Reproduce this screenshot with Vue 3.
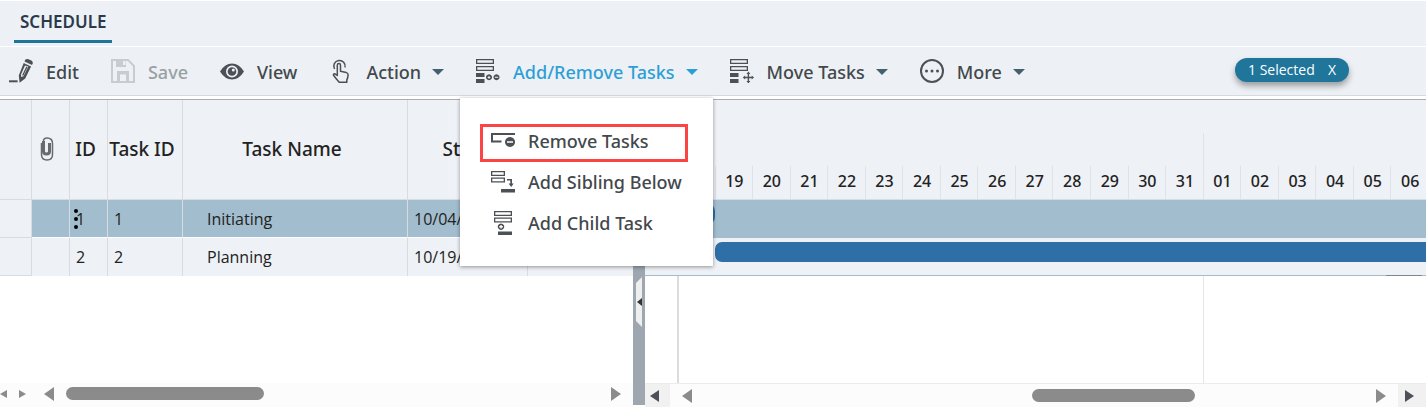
<script setup>
const rows = [
  { id: 1, taskId: 1, name: 'Initiating', start: '10/04/2023', selected: true },
  { id: 2, taskId: 2, name: 'Planning', start: '10/19/2023', selected: false },
]

const days = [
  '18', '19', '20', '21', '22', '23', '24', '25', '26', '27',
  '28', '29', '30', '31', '01', '02', '03', '04', '05', '06',
]

const gridScroll = { start: 0, size: 37 }
const chartScroll = { start: 49.8, size: 24.4 }

const thumb = (s) => ({ marginLeft: s.start + '%', width: s.size + '%' })
</script>

<template>
  <div class="app">
    <nav class="tabs">
      <a href="#schedule" class="tab">SCHEDULE</a>
    </nav>

    <div class="toolbar" role="toolbar" aria-label="Schedule">
      <button class="tool" type="button">
        <svg class="icon" viewBox="0 0 24 24">
          <path d="M0 21.3h8.6v2H0z" />
          <path d="M16.2.8Q17.600-.4 19.500.3l2.900 1.300q1.800 1 1.300 3l-.7 1.300-7.500-3.400z" />
          <path fill-rule="evenodd" d="M14.700 4l7.400 3.400-5.900 12.100-5.600 4.200-.8-7.300zM16 6.600l-4 8.800.2 2.700 2.300-.9 4.700-9.600z" />
          <path d="M17.300 7.400l1.200.6-4.200 8.700-1.200-.5z" />
        </svg>
        <span>Edit</span>
      </button>

      <button class="tool" type="button" disabled>
        <svg class="icon" viewBox="0 0 24 24">
          <path fill-rule="evenodd" d="M0 0h17.500L24 6.500V22h-2V7.400L16.700 2H15v6H5V2H2v20h4v-10h12v10h6v2H0zM12 2v4h2.500V2zM9 15.500V22h6v-6.500z" />
          <path d="M10 16.500h4v3.500h-4z" class="slot" />
        </svg>
        <span>Save</span>
      </button>

      <button class="tool" type="button">
        <svg class="icon" viewBox="0 0 24 24">
          <path fill-rule="evenodd" d="M0 12.500Q5 4.500 12 4.500T24 12.500Q19 20.500 12 20.500T0 12.500zM12 6.500a6 6 0 1 0 0 12a6 6 0 0 0 0-12z" />
          <circle cx="12" cy="12.500" r="4.300" />
          <circle cx="13.300" cy="11" r="1.500" class="glint" />
        </svg>
        <span>View</span>
      </button>

      <button class="tool" type="button">
        <svg class="icon line" viewBox="0 0 24 24">
          <path d="M5.500 10A5.700 5.700 0 1 1 16 8.500" />
          <path d="M8.300 16.500V6.200q0-1.600 1.600-1.600t1.600 1.600v6l5.800 1.400q1.800.5 1.800 2.300-.1 2.400-1.300 5.200v2.200h-7.600q-3-3.400-5.700-7-.2-1.600 1.400-1.500z" />
        </svg>
        <span>Action</span>
        <i class="caret"></i>
      </button>

      <div class="dropdown">
        <button class="tool open" type="button" aria-haspopup="menu" aria-expanded="true">
          <svg class="icon" viewBox="0 0 24 24">
            <path fill-rule="evenodd" d="M0 0h18v5H0zM1.300 1.300v2.400h15.400V1.300zM0 7h18v5H0zM1.300 8.300v2.400h15.400V8.300z" />
            <path d="M0 14h8.500v4H0zM0 20h8.500v4H0z" />
            <path fill-rule="evenodd" d="M13 15.300a3 3 0 1 0 .01 0zM12.500 17h1v.9h.8v1h-.8v.9h-1v-.9h-.8v-1h.8zM20.500 15.300a3 3 0 1 0 .01 0zM18.800 17.800h3.400v1h-3.400z" />
          </svg>
          <span>Add/Remove Tasks</span>
          <i class="caret"></i>
        </button>

        <div class="menu" role="menu">
          <button class="item marked" type="button" role="menuitem">
            <svg class="icon" viewBox="0 0 24 24">
              <path d="M0 4h24v2H2v5.500h8.500v2H0z" />
              <path fill-rule="evenodd" d="M19 8a5 5 0 1 0 .01 0zM16 12.200h6v1.600h-6z" />
            </svg>
            <span>Remove Tasks</span>
          </button>
          <button class="item" type="button" role="menuitem">
            <svg class="icon" viewBox="0 0 24 24">
              <path fill-rule="evenodd" d="M0 1h14v5H0zM1.300 2.300v2.400h11.400V2.300zM0 7.500h14v5H0zM1.300 8.800v2.400h11.400V8.800z" />
              <path d="M16 9h5v4.500h1.700L20.200 17l-2.600-3.500h1.700v-3H16zM10 19h14v3.500H10z" />
            </svg>
            <span>Add Sibling Below</span>
          </button>
          <button class="item" type="button" role="menuitem">
            <svg class="icon" viewBox="0 0 24 24">
              <path fill-rule="evenodd" d="M3 0h18v5H3zM4.300 1.300v2.400h15.400V1.300zM3 6.500h18v5H3zM4.300 7.800v2.400h15.400V7.800z" />
              <path fill-rule="evenodd" d="M10 12.500a3.200 3.200 0 1 0 .01 0zM9.400 14h1.300v1.100h1.100v1.300h-1.100v1.100H9.400v-1.100H8.300v-1.300h1.100zM7 20.500h14V24H7z" />
            </svg>
            <span>Add Child Task</span>
          </button>
        </div>
      </div>

      <button class="tool" type="button">
        <svg class="icon" viewBox="0 0 24 24">
          <path fill-rule="evenodd" d="M0 0h18v5H0zM1.300 1.300v2.400h15.400V1.300zM0 7h18v5H0zM1.300 8.300v2.400h15.400V8.300z" />
          <path d="M0 14h8.500v4H0zM0 20h8.500v4H0z" />
          <path d="M18.400 12.500l1.900 2.500h-1.200v2.800h2.600v-1.300l2.300 2-2.300 2v-1.300h-2.600v2.800h1.200l-1.900 2.500-1.900-2.500h1.200v-2.800h-2.600v1.300l-2.300-2 2.300-2v1.300h2.600V15h-1.200z" />
        </svg>
        <span>Move Tasks</span>
        <i class="caret"></i>
      </button>

      <button class="tool" type="button">
        <svg class="icon" viewBox="0 0 24 24">
          <circle cx="12" cy="12" r="11" class="ring" />
          <circle cx="6.500" cy="12" r="1.500" />
          <circle cx="12" cy="12" r="1.500" />
          <circle cx="17.500" cy="12" r="1.500" />
        </svg>
        <span>More</span>
        <i class="caret"></i>
      </button>

      <div class="pill">
        <span>1 Selected</span>
        <button type="button" aria-label="Clear selection">X</button>
      </div>
    </div>

    <main class="panes">
      <section class="grid-pane">
        <table>
          <colgroup>
            <col class="c-handle" /><col class="c-id" /><col class="c-id" />
            <col class="c-task" /><col class="c-name" /><col class="c-start" /><col />
          </colgroup>
          <thead>
            <tr>
              <th></th>
              <th>
                <svg class="clip" viewBox="0 0 14 24" role="img" aria-label="Attachments">
                  <path d="M3.500 4v10.500q0 2.500 3 2.500t3-2.500V6" class="inner" />
                  <path d="M1.500 6v11.500q0 5.500 5.500 5.500t5.500-5.500V6.500q0-5.500-5.500-5.500-3.500 0-3.500 3" />
                </svg>
              </th>
              <th>ID</th>
              <th>Task ID</th>
              <th>Task Name</th>
              <th>Start</th>
              <th></th>
            </tr>
          </thead>
          <tbody>
            <tr v-for="row in rows" :key="row.id" :class="{ selected: row.selected }">
              <td></td>
              <td></td>
              <td class="id">
                <svg v-if="row.selected" class="dots" viewBox="0 0 4 20">
                  <circle cx="2" cy="2" r="2" /><circle cx="2" cy="10" r="2" /><circle cx="2" cy="18" r="2" />
                </svg>
                {{ row.id }}
              </td>
              <td>{{ row.taskId }}</td>
              <td class="name">{{ row.name }}</td>
              <td>{{ row.start }}</td>
              <td></td>
            </tr>
          </tbody>
        </table>
        <div class="scrollbar">
          <i class="arrow left small"></i>
          <i class="arrow right small second"></i>
          <i class="arrow left big"></i>
          <div class="track"><div class="thumb" :style="thumb(gridScroll)"></div></div>
          <i class="arrow right big"></i>
        </div>
      </section>

      <div class="splitter">
        <svg class="grip" viewBox="0 0 6 50">
          <path d="M6 0v50L0 44V6z" class="plate" />
          <path d="M6 21v8l-5-4z" class="tip" />
        </svg>
      </div>

      <section class="chart-pane">
        <div class="chart-head">
          <div class="timeline head-grid">
            <span class="month"></span>
            <span class="month next"></span>
            <span v-for="day in days" :key="day" class="day">{{ day }}</span>
          </div>
        </div>
        <div class="chart-row selected"><div class="timeline"><div class="bar first"></div></div></div>
        <div class="chart-row"><div class="timeline"><div class="bar second"></div></div></div>
        <div class="chart-body timeline">
          <span class="month-line"></span>
          <span class="month-line next"></span>
          <span class="stub"></span>
        </div>
        <div class="scrollbar">
          <span class="step"><i class="arrow left dark"></i></span>
          <i class="arrow left big"></i>
          <div class="track"><div class="thumb" :style="thumb(chartScroll)"></div></div>
          <i class="arrow right big"></i>
          <span class="step end"><i class="arrow right dark"></i></span>
        </div>
      </section>
    </main>
  </div>
</template>

<style>
body {
  margin: 0;
  background: #fff;
}
</style>

<style scoped>
* {
  box-sizing: border-box;
}
.app {
  display: flex;
  flex-direction: column;
  height: 100vh;
  min-height: 400px;
  overflow: hidden;
  font-family: "Open Sans", "Noto Sans", sans-serif;
  font-size: 16px;
  color: #222;
}
button {
  border: 0;
  padding: 0;
  background: none;
  font: inherit;
  color: inherit;
}
.tabs {
  flex: none;
  display: flex;
  height: 47px;
  padding-left: 14px;
  background: #edf1f5;
  border-top: 1px solid #fff;
  border-bottom: 1px solid #fff;
}
.tab {
  height: 42px;
  padding: 0 6px;
  border-bottom: 3px solid #1f7499;
  font-family: "Noto Sans", "Open Sans", sans-serif;
  font-size: 17px;
  font-weight: 600;
  line-height: 41px;
  color: #2b3a4b;
  text-decoration: none;
}
.toolbar {
  flex: none;
  display: flex;
  align-items: center;
  gap: 32px;
  height: 49px;
  padding: 2px 77px 0 9px;
  background: #edf1f5;
  border-bottom: 1px solid #d6dadf;
  font-family: "Noto Sans", "Open Sans", sans-serif;
  font-size: 18px;
  font-weight: 500;
}
.tool {
  display: flex;
  align-items: center;
  height: 46px;
  color: #43484c;
  white-space: nowrap;
}
.tool .icon {
  margin-bottom: 2px;
}
.tool:disabled {
  color: #9a9fa4;
}
.tool:disabled .icon {
  fill: #c9cccf;
}
.icon {
  flex: none;
  width: 24px;
  height: 24px;
  margin-right: 13px;
  fill: #4b5157;
}
.icon.line {
  fill: none;
  stroke: #4b5157;
  stroke-width: 1.500;
  stroke-linejoin: round;
}
.glint {
  fill: #edf1f5;
}
.slot {
  fill: #edf1f5;
}
.ring {
  fill: none;
  stroke: #4b5157;
  stroke-width: 2;
}
.caret {
  margin-left: 11px;
  border: 6px solid transparent;
  border-top-color: #44606e;
  border-bottom: 0;
}
.tool.open {
  color: #2d9fd6;
}
.tool.open .caret {
  border-top-color: #2d9fd6;
}
.dropdown {
  position: relative;
}
.menu {
  position: absolute;
  z-index: 2;
  top: 49px;
  left: -16px;
  width: 253px;
  padding: 23px 20px;
  background: #fff;
  box-shadow: 0 1px 4px rgba(0, 0, 0, 0.4);
}
.item {
  display: flex;
  align-items: center;
  width: 100%;
  height: 41px;
  padding: 0 11px;
  color: #43484c;
  white-space: nowrap;
}
.item.marked {
  width: 208px;
  height: 38px;
  margin: 3px 0 -1px;
  padding: 0 8px 5px;
  border: 3px solid #fb4444;
}
.pill {
  display: flex;
  justify-content: space-between;
  align-items: center;
  width: 114px;
  height: 24px;
  margin-left: auto;
  margin-bottom: 5px;
  padding: 0 13px;
  border-radius: 12px;
  background: #20759a;
  box-shadow: 0 4px 6px rgba(0, 0, 0, 0.35);
  font-family: "Open Sans", "Noto Sans", sans-serif;
  font-size: 14px;
  font-weight: 400;
  color: #fff;
}
.panes {
  flex: 1;
  display: flex;
  min-height: 0;
  margin-top: 3px;
  border-top: 1px solid #a9aeb3;
}
.grid-pane {
  flex: 0 0 633px;
  display: flex;
  flex-direction: column;
  justify-content: space-between;
  min-width: 0;
  overflow: hidden;
}
table {
  width: 100%;
  table-layout: fixed;
  border-collapse: separate;
  border-spacing: 0;
  background: #eef1f5;
}
.c-handle {
  width: 32px;
}
.c-id {
  width: 38px;
}
.c-task {
  width: 75px;
}
.c-name {
  width: 225px;
}
.c-start {
  width: 120px;
}
th {
  height: 100px;
  padding: 0 6px 2px 0;
  border-right: 1px solid #d8dbdf;
  border-bottom: 1px solid #d8dbdf;
  font-family: "Noto Sans", "Open Sans", sans-serif;
  font-size: 19px;
  font-weight: 500;
  white-space: nowrap;
}
td {
  height: 38px;
  padding: 0 0 0 6px;
  border-right: 1px solid #d8dbdf;
  white-space: nowrap;
}
td:first-child {
  border-bottom: 1px solid #d8dbdf;
}
th:last-child,
td:last-child {
  border-right: 0;
}
.selected td:not(:first-child) {
  background: #a2bdce;
  border-bottom: 1px solid #fff;
}
.name {
  padding-left: 24px;
}
.id {
  position: relative;
}
.dots {
  position: absolute;
  top: 9px;
  left: 4px;
  width: 4px;
  height: 20px;
  fill: #000;
}
.clip {
  display: block;
  width: 14px;
  height: 24px;
  margin: 0 0 0 8px;
  fill: none;
  stroke: #666b70;
  stroke-width: 1.500;
}
.inner {
  stroke-width: 3;
}
.scrollbar {
  flex: none;
  display: flex;
  align-items: center;
  height: 24px;
  padding: 0 12px 3px 0;
  background: #fcfcfc;
}
.arrow {
  flex: none;
  border: 4px solid transparent;
}
.arrow.left {
  border-left: 0;
  border-right: 7px solid #8b8b8b;
}
.arrow.right {
  border-right: 0;
  border-left: 7px solid #8b8b8b;
}
.arrow.second {
  margin: 0 18px 0 12px;
}
.arrow.big {
  border-top-width: 7px;
  border-bottom-width: 7px;
}
.arrow.big.left {
  border-right-width: 10px;
}
.arrow.big.right {
  border-left-width: 10px;
}
.arrow.dark {
  border-top-width: 6px;
  border-bottom-width: 6px;
}
.arrow.dark.left {
  border-right: 9px solid #4b5157;
}
.arrow.dark.right {
  border-left: 9px solid #4b5157;
}
.track {
  flex: 1;
  margin: 0 9px 0 12px;
}
.thumb {
  height: 13px;
  border-radius: 7px;
  background: #8b8b8b;
}
.splitter {
  flex: 0 0 12px;
  margin-bottom: 2px;
  padding: 177px 0 0 3px;
  background: #9ea6b0;
}
.grip {
  display: block;
  width: 6px;
  height: 50px;
}
.plate {
  fill: #efefef;
}
.tip {
  fill: #333;
}
.chart-pane {
  flex: 1;
  display: flex;
  flex-direction: column;
  min-width: 0;
  overflow: hidden;
}
.timeline {
  display: grid;
  grid-template-columns: repeat(20, 1fr);
  margin: 0 -2px 0 32px;
}
.chart-head {
  flex: none;
  height: 100px;
  background: #eef1f5;
  border-bottom: 1px solid #d8dbdf;
}
.head-grid {
  grid-template-rows: 33px 33px 33px;
}
.month {
  grid-row: 2;
  grid-column: 1 / 15;
}
.month.next {
  grid-column: 15 / -1;
  border-left: 1px solid #dfe2e6;
}
.day {
  grid-row: 3;
  padding-left: 1px;
  border-left: 1px solid #dfe2e6;
  font-family: "Noto Sans", "Open Sans", sans-serif;
  font-weight: 500;
  line-height: 30px;
  text-align: center;
}
.chart-row {
  flex: none;
  height: 38px;
  background: #eef1f5;
  border-bottom: 1px solid #a2bdce;
}
.chart-row.selected {
  background: #a2bdce;
}
.bar {
  height: 20px;
  margin-top: 4px;
  border-radius: 7px;
  background: #2f6fa7;
}
.bar.first {
  grid-column: 1 / 2;
}
.bar.second {
  grid-column: 2 / -1;
  border-top-right-radius: 0;
  border-bottom-right-radius: 0;
}
.chart-body {
  flex: 1;
}
.month-line {
  grid-row: 1;
  grid-column: 1 / 15;
  border-left: 2px solid #dcdcdc;
}
.month-line.next {
  grid-column: 15 / 20;
  border-left: 1px solid #e6e6e6;
}
.stub {
  grid-row: 1;
  grid-column: 19 / 21;
  height: 1px;
  margin: -1px 6px 0 33px;
  background: #7f868c;
}
.chart-pane .scrollbar {
  padding: 0;
  border-top: 1px solid #ececec;
}
.chart-pane .track {
  margin-left: 8px;
}
.step {
  display: flex;
  align-items: center;
  width: 25px;
  height: 100%;
  margin-right: 12px;
  padding-left: 5px;
  background: #f1f1f1;
}
.step.end {
  width: 28px;
  margin: 0 0 0 12px;
  padding-left: 7px;
}
</style>
